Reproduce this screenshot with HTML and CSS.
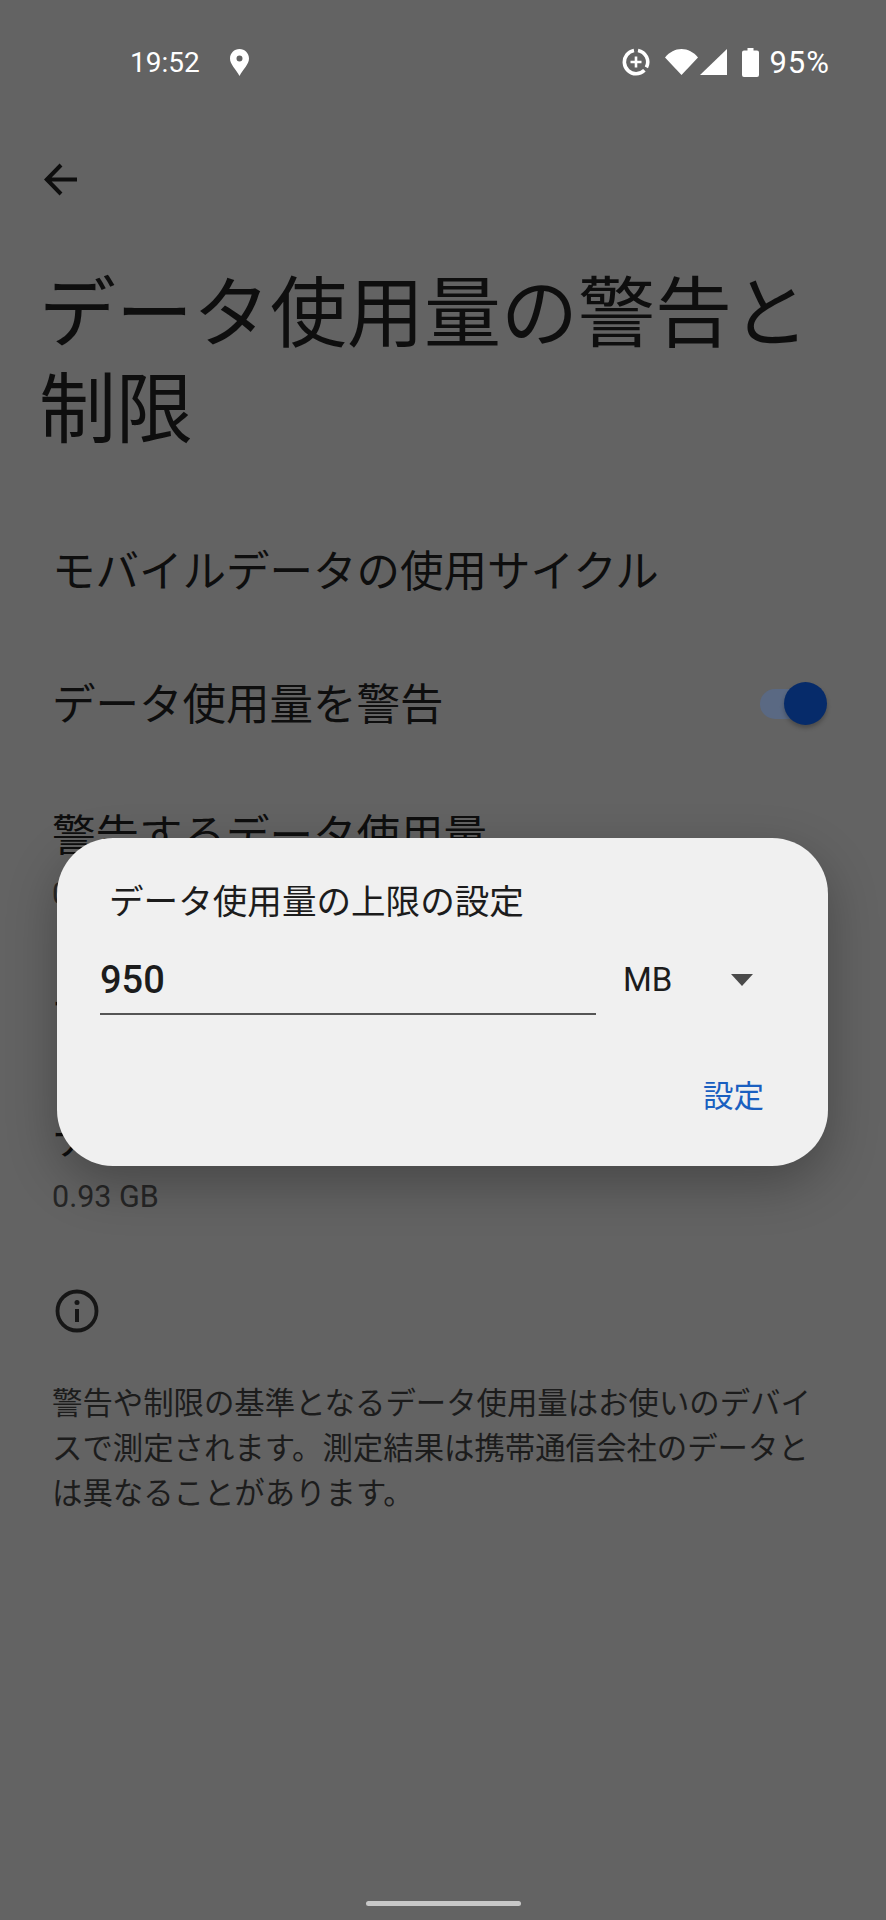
FILE: index.html
```html
<!DOCTYPE html>
<html lang="ja">
<head>
    <meta charset="UTF-8">
    <meta name="viewport" content="width=device-width, initial-scale=1.0">
    <title>データ使用量の警告と制限</title>
    <link rel="stylesheet" href="styles.css">
</head>
<body>
    <div class="screen">
        <div class="status-bar">
            <div class="status-left">
                <span class="status-text">19:52</span>
                <svg class="icon-pin" viewBox="0 0 19 27">
                    <path fill-rule="evenodd" fill="#fff" d="M9.5 0C4.2 0 0 4.2 0 9.5 0 15.5 6 20 9.5 27 13 20 19 15.5 19 9.5 19 4.2 14.8 0 9.5 0zm0 6.5a3 3 0 1 1 0 6 3 3 0 0 1 0-6z"/>
                </svg>
            </div>
            <div class="status-right">
                <svg class="icon-saver" viewBox="0 0 28 28">
                    <path fill="none" stroke="#fff" stroke-width="3.6" d="M12 2.4A11.8 11.8 0 0 0 14 25.8a11.8 11.8 0 0 0 8.4-3.5M16 2.4a11.8 11.8 0 0 1 8.4 17"/>
                    <path fill="none" stroke="#fff" stroke-width="2.6" d="M14 8.5v11M8.5 14h11"/>
                </svg>
                <svg class="icon-wifi" viewBox="0 0 33 26">
                    <path fill="#fff" d="M0 8.500C4.500 3 10.200 0 16.500 0S28.500 3 33 8.500L16.500 26z"/>
                </svg>
                <svg class="icon-signal" viewBox="0 0 27 26">
                    <path fill="#fff" d="M27 0v26H0z"/>
                </svg>
                <svg class="icon-battery" viewBox="0 0 17 29">
                    <path fill="#fff" d="M5.500 0h6v2.500H15a2 2 0 0 1 2 2V27a2 2 0 0 1-2 2H2a2 2 0 0 1-2-2V4.500a2 2 0 0 1 2-2h3.500z"/>
                </svg>
                <span class="status-text battery-level">95%</span>
            </div>
        </div>

        <div class="toolbar">
            <svg class="icon-back" viewBox="0 0 33 33">
                <path fill="none" stroke="#0e0e0e" stroke-width="4" d="M33 16.500H3M17 2L2.800 16.500 17 31"/>
            </svg>
        </div>

        <h1 class="page-title">データ使用量の警告と<br>制限</h1>

        <div class="settings-list">
            <div class="row row-single">
                <div class="row-title">モバイルデータの使用サイクル</div>
            </div>
            <div class="row row-single">
                <div class="row-title">データ使用量を警告</div>
                <div class="switch"><div class="switch-thumb"></div></div>
            </div>
            <div class="row row-double">
                <div class="row-title">警告するデータ使用量</div>
                <div class="row-summary">0.80 GB</div>
            </div>
            <div class="row row-single">
                <div class="row-title">データ上限の設定</div>
            </div>
            <div class="row row-double">
                <div class="row-title">データ上限</div>
                <div class="row-summary">0.93 GB</div>
            </div>
        </div>

        <div class="footer-info">
            <svg class="icon-info" viewBox="0 0 44 44">
                <circle cx="22" cy="22" r="19.500" fill="none" stroke="#161616" stroke-width="3.800"/>
                <path fill="none" stroke="#161616" stroke-width="4" d="M22 20v13"/>
                <circle cx="22" cy="13.500" r="2.500" fill="#161616"/>
            </svg>
            <p class="info-text">警告や制限の基準となるデータ使用量はお使いのデバイスで測定されます。測定結果は携帯通信会社のデータとは異なることがあります。</p>
        </div>

        <div class="nav-handle"></div>

        <div class="dialog">
            <div class="dialog-title">データ使用量の上限の設定</div>
            <div class="dialog-fields">
                <div class="number-field">950</div>
                <div class="unit-select">
                    <span>MB</span>
                    <span class="select-arrow"></span>
                </div>
            </div>
            <div class="dialog-actions">
                <span class="dialog-button">設定</span>
            </div>
        </div>
    </div>
</body>
</html>
```

FILE: styles.css
```css
body {
    margin: 0;
    padding: 0;
    background-color: #636363;
    font-family: "Roboto", "Noto Sans CJK JP", sans-serif;
}
.screen {
    position: relative;
    display: flex;
    flex-direction: column;
    height: 1920px;
    overflow: hidden;
    background-color: #636363;
    color: #0e0e0e;
}

/* status bar */
.status-bar {
    display: flex;
    justify-content: space-between;
    align-items: center;
    height: 124px;
    padding: 0 56px 0 130px;
}
.status-left,
.status-right {
    display: flex;
    align-items: center;
}
.status-text {
    color: #fff;
    font-size: 28px;
}
.icon-pin {
    width: 19px;
    height: 27px;
    margin-left: 30px;
}
.icon-saver {
    width: 28px;
    height: 28px;
}
.icon-wifi {
    width: 33px;
    height: 26px;
    margin-left: 15px;
}
.icon-signal {
    width: 27px;
    height: 26px;
    margin-left: 2px;
}
.icon-battery {
    width: 17px;
    height: 29px;
    margin-left: 15px;
}
.battery-level {
    margin-left: 10px;
    font-size: 31px;
    letter-spacing: 1px;
}

/* top of the page */
.toolbar {
    padding: 39px 0 0 44px;
    height: 33px;
}
.icon-back {
    display: block;
    width: 33px;
    height: 33px;
}
.page-title {
    margin: 64px 0 0 39px;
    font-size: 77px;
    font-weight: 400;
    line-height: 96px;
    font-family: "Noto Sans CJK JP", sans-serif;
}

/* settings rows */
.settings-list {
    margin-top: 50px;
    font-family: "Noto Sans CJK JP", sans-serif;
}
.row {
    position: relative;
    display: flex;
    flex-direction: column;
    padding: 0 60px 0 52px;
}
.row-single {
    height: 133px;
    justify-content: center;
}
.row-double {
    height: 170px;
    box-sizing: border-box;
    padding-top: 35px;
}
.row-title {
    font-size: 43.500px;
    line-height: 60px;
}
.row-summary {
    margin-top: 8px;
    color: #262626;
    font-size: 30.500px;
    line-height: 46px;
    font-family: "Roboto", sans-serif;
}
.switch {
    position: absolute;
    top: 50%;
    right: 66px;
    width: 60px;
    height: 30px;
    margin-top: -13px;
    border-radius: 15px;
    background-color: #5a6983;
}
.switch-thumb {
    position: absolute;
    top: -7px;
    right: -7px;
    width: 43px;
    height: 43px;
    border-radius: 50%;
    background-color: #062b6a;
    box-shadow: 0 3px 4px rgba(0, 0, 0, 0.25);
}

/* note under the list */
.footer-info {
    padding: 48px 52px 0;
}
.icon-info {
    display: block;
    width: 44px;
    height: 44px;
    margin-left: 3px;
}
.info-text {
    margin: 46px 0 0;
    color: #1c1c1c;
    font-size: 30.400px;
    line-height: 45px;
    font-family: "Noto Sans CJK JP", sans-serif;
}

.nav-handle {
    width: 155px;
    height: 5px;
    margin: auto auto 14px;
    border-radius: 3px;
    background-color: #c8c8c8;
}

/* dialog over the page */
.dialog {
    position: absolute;
    top: 838px;
    left: 57px;
    width: 771px;
    height: 328px;
    box-sizing: border-box;
    padding: 0 43px;
    border-radius: 56px;
    background-color: #f0f0f0;
    box-shadow: 0 18px 50px rgba(0, 0, 0, 0.28);
    font-family: "Noto Sans CJK JP", sans-serif;
}
.dialog-title {
    padding: 35px 0 0 9px;
    font-size: 34.600px;
    line-height: 52px;
    color: #1c1c1c;
}
.dialog-fields {
    display: flex;
    margin-top: 29px;
}
.number-field {
    width: 496px;
    height: 59px;
    border-bottom: 2px solid #555;
    color: #1c1c1c;
    font-family: "Roboto", sans-serif;
    font-size: 38px;
    font-weight: 500;
    line-height: 52px;
}
.unit-select {
    display: flex;
    align-items: flex-start;
    margin-left: 27px;
    font-family: "Roboto", sans-serif;
    font-size: 33px;
    line-height: 52px;
    color: #1c1c1c;
}
.select-arrow {
    width: 0;
    height: 0;
    margin: 20px 0 0 59px;
    border-top: 12px solid #4a4a4a;
    border-left: 11px solid transparent;
    border-right: 11px solid transparent;
}
.dialog-actions {
    display: flex;
    justify-content: flex-end;
    margin-top: 57px;
    padding-right: 21px;
}
.dialog-button {
    color: #1a5fc0;
    font-size: 30.500px;
    line-height: 44px;
}
```
